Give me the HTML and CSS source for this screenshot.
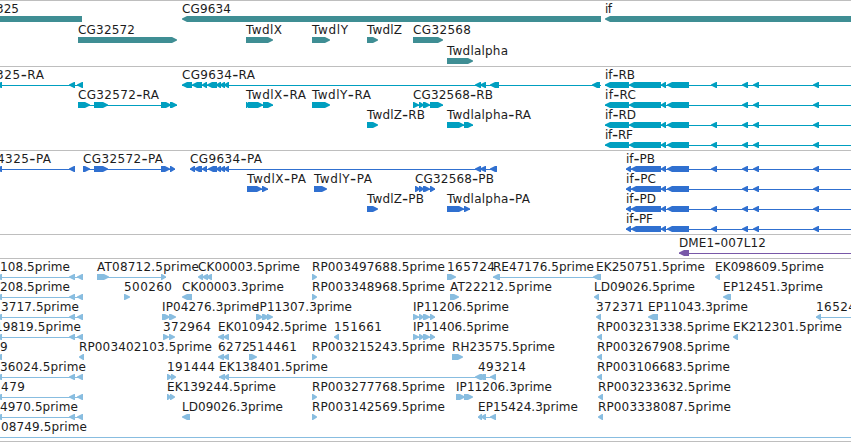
FILE: index.html
```html
<!DOCTYPE html>
<html lang="en">
<head>
<meta charset="utf-8">
<title>Genome tracks</title>
<link rel="stylesheet" href="styles.css">
</head>
<body>
<main class="tracks" id="tracks"></main>
<script src="tracks.js"></script>
</body>
</html>
```
FILE: styles.css
```css
body {
  margin: 0;
  background: #fff;
  overflow: hidden;
}
.tracks {
  display: flex;
  flex-direction: column;
  width: 851px;
  height: 442px;
  overflow: hidden;
}
.track {
  flex: none;
  border-top: 1px solid #bebebe;
}
.track svg {
  display: block;
  overflow: hidden;
}
.label {
  font: 12px "DejaVu Sans", sans-serif;
  fill: #1c1c1c;
}
.hyphen { font-size: 17px; }
.shape { fill: #88bde0; }
.genes .shape { fill: #3f8e94; }
.transcripts .shape { fill: #009fc0; }
.proteins .shape { fill: #3070d0; }
.clones .shape { fill: #7858a8; }
.ests .shape { fill: #88bde0; }
```
FILE: tracks.js
```javascript
// Feature: [label, labelStart, labelEnd, row, direction, exons, line]
const R = 1, L = -1;
const ifExons = [[605, 629], [629, 661], [661, 666], [667, 689]];
const ifCds = [[626, 631], [631, 661], [661, 666], [667, 689]];
const small = [[711, 717], [742, 748], [753, 759], [813, 819]];
const few = small.slice(1);
const leftEst = [[-4, 2], [69, 75], [77, 83]];

const tracks = [
  { name: "genes", height: 66, base: 12, step: 21, features: [
    ["325", -4, 19, 0, L, [[-20, 82]]],
    ["CG9634", 182, 231, 0, L, [[182, 601]]],
    ["if", 605, 612, 0, L, [[605, 870]]],
    ["CG32572", 78, 135, 1, R, [[78, 177]]],
    ["TwdlX", 246, 282, 1, R, [[246, 273]]],
    ["TwdlY", 312, 348, 1, R, [[312, 330]]],
    ["TwdlZ", 367, 402, 1, R, [[367, 378]]],
    ["CG32568", 413, 471, 1, R, [[413, 443]]],
    ["Twdlalpha", 447, 508, 2, R, [[447, 473]]]
  ]},
  { name: "transcripts", height: 84, base: 12, step: 20, features: [
    ["325-RA", -4, 44, 0, L, leftEst, [0, 82]],
    ["CG9634-RA", 182, 255, 0, L, [[182, 192], [192, 202], [202, 207], [207, 217], [216, 221], [220, 225], [224, 229], [475, 481], [480, 486], [490, 499], [592, 600]], [182, 601]],
    ["if-RB", 605, 635, 0, L, [...ifExons, ...small], [605, 851]],
    ["CG32572-RA", 78, 159, 1, R, [[78, 90], [94, 108], [161, 171], [170, 177]], [78, 177]],
    ["TwdlX-RA", 246, 306, 1, R, [[246, 249], [248, 263], [263, 273]], [246, 273]],
    ["TwdlY-RA", 312, 371, 1, R, [[312, 330]]],
    ["CG32568-RB", 413, 493, 1, R, [[413, 419], [419, 424], [423, 430], [430, 443]], [413, 443]],
    ["if-RC", 605, 636, 1, L, [...ifExons, ...few], [605, 851]],
    ["TwdlZ-RB", 367, 425, 2, R, [[367, 378]]],
    ["Twdlalpha-RA", 447, 531, 2, R, [[447, 464], [464, 473]], [447, 473]],
    ["if-RD", 605, 636, 2, L, [...ifExons, ...small], [605, 851]],
    ["if-RF", 605, 633, 3, L, [...ifExons, ...small], [605, 851]]
  ]},
  { name: "proteins", height: 84, base: 12, step: 20, features: [
    ["4325-PA", -3, 51, 0, L, [[-4, 2], [69, 75]], [0, 75]],
    ["CG32572-PA", 83, 163, 0, R, [[83, 90], [94, 108], [161, 170], [170, 175]], [83, 175]],
    ["CG9634-PA", 190, 262, 0, L, [[190, 195], [194, 202], [202, 207], [208, 217], [216, 221], [220, 225], [224, 229], [475, 481], [480, 486], [490, 497]], [190, 497]],
    ["if-PB", 626, 655, 0, L, [...ifCds, ...small], [626, 851]],
    ["TwdlX-PA", 247, 306, 1, R, [[247, 262], [262, 268]], [247, 268]],
    ["TwdlY-PA", 314, 372, 1, R, [[314, 327]]],
    ["CG32568-PB", 415, 494, 1, R, [[415, 420], [419, 424], [423, 430], [430, 435]], [415, 435]],
    ["if-PC", 626, 656, 1, L, [...ifCds, ...few], [626, 851]],
    ["TwdlZ-PB", 367, 424, 2, R, [[367, 378]]],
    ["Twdlalpha-PA", 447, 530, 2, R, [[447, 464], [464, 470]], [447, 470]],
    ["if-PD", 626, 656, 2, L, [...ifCds, ...small], [626, 851]],
    ["if-PF", 626, 653, 3, L, [...ifCds, ...small], [626, 851]]
  ]},
  { name: "clones", height: 24, base: 12, step: 20, features: [
    ["DME1-007L12", 679, 766, 0, L, [[679, 689]], [679, 851]]
  ]},
  { name: "ests", height: 183, base: 12, step: 20, features: [
    ["108.5prime", 0, 70, 0, L, leftEst, [0, 82]],
    ["AT08712.5prime", 97, 199, 0, R, [[97, 109], [161, 166]], [97, 166]],
    ["CK00003.5prime", 198, 300, 0, L, [[198, 203], [202, 208], [206, 212]]],
    ["RP003497688.5prime", 312, 445, 0, R, [[312, 317]]],
    ["165724", 447, 495, 0, R, [[447, 456]]],
    ["RE47176.5prime", 493, 594, 0, L, [[493, 500], [593, 600]], [493, 600]],
    ["EK250751.5prime", 596, 705, 0, L, [[594, 601]]],
    ["EK098609.5prime", 715, 824, 0, L, [[715, 720]]],
    ["208.5prime", 0, 70, 1, L, leftEst, [0, 82]],
    ["500260", 124, 172, 1, R, [[124, 130]]],
    ["CK00003.3prime", 182, 284, 1, L, [[182, 192]]],
    ["RP003348968.5prime", 312, 445, 1, R, [[312, 317]]],
    ["AT22212.5prime", 450, 552, 1, R, [[450, 459]]],
    ["LD09026.5prime", 594, 695, 1, L, [[594, 599]]],
    ["EP12451.3prime", 723, 823, 1, L, [[723, 731]]],
    ["3717.5prime", 1, 79, 2, L, leftEst, [0, 82]],
    ["IP04276.3prime", 162, 259, 2, R, [[162, 170], [169, 176]]],
    ["IP11307.3prime", 256, 352, 2, R, [[256, 263], [262, 269], [267, 273]]],
    ["IP11206.5prime", 413, 509, 2, R, [[413, 419], [419, 424], [423, 430], [430, 435]], [413, 435]],
    ["372371", 596, 644, 2, L, [[596, 601]]],
    ["EP11043.3prime", 648, 748, 2, L, [[648, 658]]],
    ["165244", 816, 864, 2, L, [[816, 821]], [816, 851]],
    ["19819.5prime", -5, 81, 3, L, leftEst, [0, 82]],
    ["372964", 163, 211, 3, R, [[163, 169], [169, 175]]],
    ["EK010942.5prime", 218, 327, 3, L, [[218, 224], [223, 229]]],
    ["151661", 334, 382, 3, L, [[334, 339]]],
    ["IP11406.5prime", 413, 509, 3, R, [[413, 419], [419, 424], [423, 430], [430, 435]], [413, 435]],
    ["RP003231338.5prime", 597, 730, 3, L, [[597, 602]]],
    ["EK212301.5prime", 733, 842, 3, L, [[733, 738]]],
    ["9", 0, 8, 4, L, [[-4, 2]]],
    ["RP003402103.5prime", 79, 212, 4, L, [[79, 84]]],
    ["6272", 218, 250, 4, L, [[218, 224], [223, 229]]],
    ["514461", 249, 297, 4, R, [[249, 257]]],
    ["RP003215243.5prime", 312, 445, 4, R, [[312, 317]]],
    ["RH23575.5prime", 452, 555, 4, R, [[452, 463]]],
    ["RP003267908.5prime", 597, 730, 4, L, [[597, 602]]],
    ["36024.5prime", 0, 86, 5, L, leftEst, [0, 82]],
    ["191444", 167, 215, 5, R, [[167, 172], [171, 176]]],
    ["EK138401.5prime", 219, 328, 5, L, [[219, 225], [224, 229], [475, 482]], [219, 482]],
    ["493214", 478, 526, 5, L, [[478, 486], [490, 496]], [478, 496]],
    ["RP003106683.5prime", 597, 730, 5, L, [[597, 602]]],
    ["479", 1, 25, 6, L, leftEst, [0, 82]],
    ["EK139244.5prime", 167, 276, 6, R, [[167, 171], [170, 175]]],
    ["RP003277768.5prime", 312, 445, 6, R, [[312, 317]]],
    ["IP11206.3prime", 456, 552, 6, R, [[456, 465], [464, 473]]],
    ["RP003233632.5prime", 598, 731, 6, L, [[598, 603]]],
    ["4970.5prime", 0, 78, 7, L, leftEst, [0, 82]],
    ["LD09026.3prime", 182, 283, 7, L, [[182, 190]]],
    ["RP003142569.5prime", 312, 445, 7, R, [[312, 317]]],
    ["EP15424.3prime", 478, 578, 7, L, [[478, 482], [481, 486], [490, 496]], [478, 496]],
    ["RP003338087.5prime", 598, 731, 7, L, [[598, 603]]],
    ["08749.5prime", 1, 87, 8, L, [], [0, 851]]
  ]},
  { name: "end", height: 1, base: 0, step: 0, features: [] }
];

const NS = "http://www.w3.org/2000/svg";
function add(parent, tag, attrs) {
  const node = document.createElementNS(NS, tag);
  for (const key in attrs) node.setAttribute(key, attrs[key]);
  parent.appendChild(node);
  return node;
}

for (const track of tracks) {
  const section = document.createElement("section");
  section.className = "track " + track.name;
  document.getElementById("tracks").appendChild(section);
  const svg = add(section, "svg", { width: 851, height: track.height - 1 });
  for (const [label, start, end, row, dir, exons, line] of track.features) {
    const y = track.base + row * track.step;
    if (line) {
      add(svg, "path", { class: "shape", d: `M${line[0]} ${y + 6}H${line[1]}V${y + 7}H${line[0]}Z` });
    }
    for (const [a, b] of exons) {
      const head = Math.min(5, b - a - 1);
      const tip = dir === R ? b : a, back = dir === R ? a : b, neck = tip - dir * head;
      add(svg, "path", { class: "shape", d: `M${back} ${y + 3}H${neck}L${tip} ${y + 5.5}V${y + 6.5}L${neck} ${y + 9}H${back}Z` });
    }
    const text = add(svg, "text", { class: "label", x: start, y });
    const [name, suffix] = label.split("-");
    text.append(name);
    if (suffix) {
      // A longer hyphen, lowered so that it sits at mid-height of the letters.
      add(text, "tspan", { class: "hyphen", dy: 1 }).textContent = "-";
      add(text, "tspan", { dy: -1 }).textContent = suffix;
    }
    text.setAttribute("textLength", end - start);
  }
}
```
